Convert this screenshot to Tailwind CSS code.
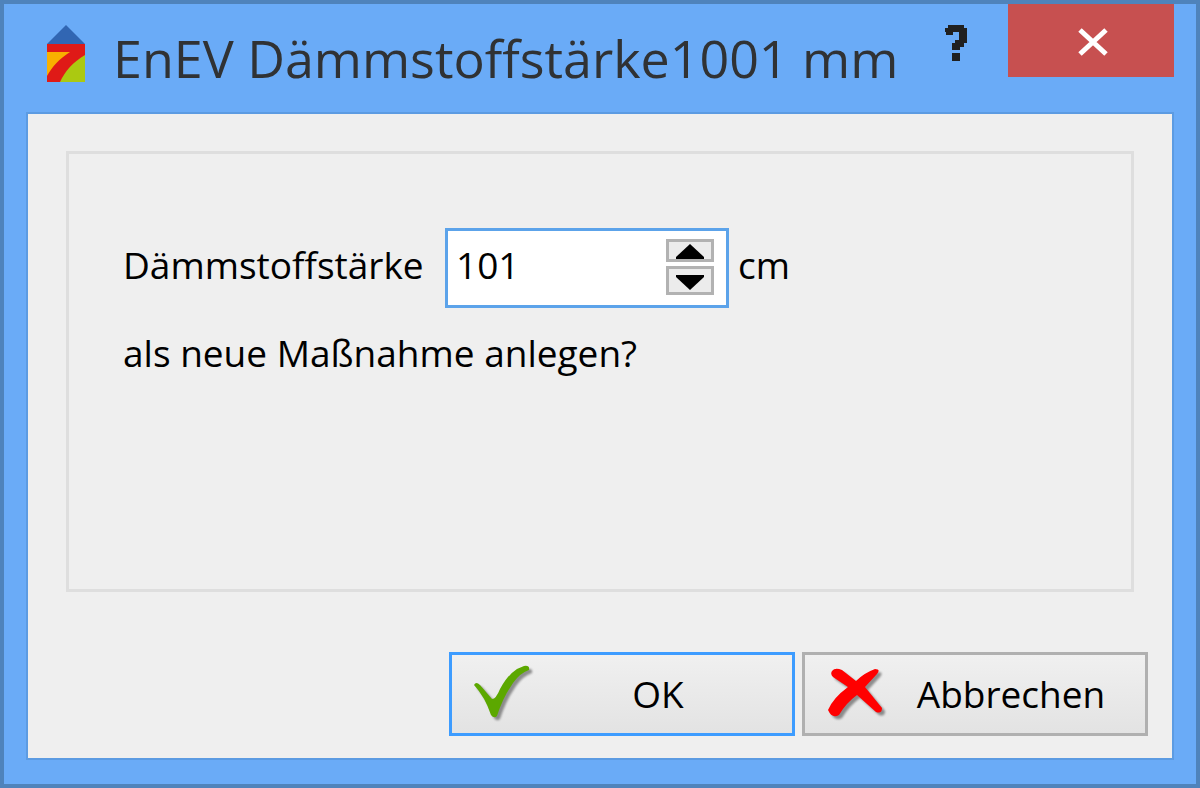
<!DOCTYPE html>
<html lang="de">
<head>
  <meta charset="UTF-8" />
  <meta name="viewport" content="width=device-width, initial-scale=1.0"/>
  <title>EnEV Dämmstoffstärke</title>
  <script src="https://cdn.jsdelivr.net/npm/@tailwindcss/browser@4"></script>
</head>
<body class="min-h-screen flex flex-col bg-[#6aabf7] border-4 border-[#4f83bb] text-black font-['Open_Sans',sans-serif]">

  <!-- Title bar -->
  <header class="flex items-start h-[108px] pl-[43px] pr-[22px]">
    <svg class="w-[38px] h-[57px] mt-[21px] shrink-0" viewBox="0 0 38 57" aria-hidden="true">
      <path d="M19 0L38 19H0z" fill="#3166b3"/>
      <path d="M0 19h38v38H0z" fill="#df1a17"/>
      <path d="M0 27h23C12 34 5 42 0 51z" fill="#f9b000"/>
      <path d="M38 30v27H13C18 46 26 37 38 30z" fill="#abc911"/>
    </svg>
    <h1 class="ml-7 mt-4 grow whitespace-nowrap text-[52px] leading-[76px] text-[#303234]">EnEV Dämmstoffstärke1001 mm</h1>
    <button type="button" aria-label="Hilfe" class="w-8 h-12 mt-[14px] mr-9 flex justify-center items-center">
      <svg class="w-6 h-10" viewBox="0 0 24 40" aria-hidden="true">
        <path d="M1 6H4V3H20V6H23V21H20V25H16V28H8V21H11V18H15V10H9V13H2V10H1z" fill="#202020"/>
        <path d="M8 31h8v8H8z" fill="#202020"/>
      </svg>
    </button>
    <button type="button" aria-label="Schließen" class="w-[166px] h-[73px] shrink-0 flex justify-center items-center pl-1 pt-[2px] bg-[#c75050]">
      <svg class="w-8 h-7" viewBox="0 0 32 28" aria-hidden="true">
        <path d="M3 2L29 26M29 2L3 26" stroke="#fff" stroke-width="5"/>
      </svg>
    </button>
  </header>

  <!-- Dialog -->
  <form class="grow flex flex-col mx-[22px] mb-6 px-[38px] pt-[37px] pb-[22px] bg-[#efefef] border-2 border-[#5c9be2]">
    <div class="grow border-3 border-[#dedede] pl-[54px] pt-[74px]">
      <div class="flex items-center">
        <label for="staerke" class="w-[322px] pb-[6px] text-[37px] leading-[50px]">Dämmstoffstärke</label>
        <div class="w-[284px] h-20 flex items-center pl-2 pr-3 bg-white border-3 border-[#5ca3ea]">
          <input id="staerke" type="text" inputmode="numeric" value="101" class="w-full min-w-0 pb-[6px] text-[37px] leading-[50px] outline-none">
          <div class="flex flex-col gap-1 pb-[2px] shrink-0">
            <button type="button" aria-label="Erhöhen" class="w-12 h-[23px] flex justify-center items-end border-3 border-[#b2b2b2] bg-[#ececec]">
              <svg class="w-7 h-4" viewBox="0 0 28 16" aria-hidden="true"><path d="M14 1L28 14v2H0v-2z"/></svg>
            </button>
            <button type="button" aria-label="Verringern" class="w-12 h-[29px] flex justify-center items-end pb-[2px] border-3 border-[#b2b2b2] bg-[#ececec]">
              <svg class="w-7 h-4" viewBox="0 0 28 16" aria-hidden="true"><path d="M14 16L28 3V1H0v2z"/></svg>
            </button>
          </div>
        </div>
        <span class="ml-[9px] pb-[6px] text-[37px] leading-[50px]">cm</span>
      </div>
      <p class="mt-5 text-[37px] leading-[50px]">als neue Maßnahme anlegen?</p>
    </div>

    <!-- Buttons -->
    <div class="flex justify-end gap-[7px] mt-[60px] -mr-[14px]">
      <button type="submit" class="w-[346px] h-[84px] flex items-center pl-[22px] border-3 border-[#3d9cff] bg-linear-to-b from-[#f0f0f0] to-[#e3e3e3] text-[37px]">
        <svg class="w-[62px] h-[58px] shrink-0 drop-shadow-[3px_3px_1px_rgba(0,0,0,0.4)]" viewBox="0 0 62 58" aria-hidden="true">
          <path d="M0 20Q2 16 6 20L18 34Q22 34 26 24Q36 5 50 1Q56 0 55 5Q46 8 39 18Q29 32 23 51Q20 54 17 50Q11 32 0 20z" fill="#5ca800"/>
        </svg>
        <span class="grow text-center pr-3">OK</span>
      </button>
      <button type="button" class="w-[346px] h-[84px] flex items-center pl-[22px] border-3 border-[#b0b0b0] bg-linear-to-b from-[#f0f0f0] to-[#e3e3e3] text-[37px]">
        <svg class="w-[62px] h-[58px] shrink-0 drop-shadow-[3px_3px_1px_rgba(0,0,0,0.4)]" viewBox="0 0 62 58" aria-hidden="true">
          <path d="M5 6Q8 2 15 5L29 16Q37 8 48 4Q54 4 50 9L38 22L55 43Q55 49 49 47L30 30Q19 38 12 50Q5 54 1 45Q6 33 21 22L6 12Q3 9 5 6z" fill="#f00"/>
        </svg>
        <span class="grow text-center pl-2 pr-5">Abbrechen</span>
      </button>
    </div>
  </form>

</body>
</html>
